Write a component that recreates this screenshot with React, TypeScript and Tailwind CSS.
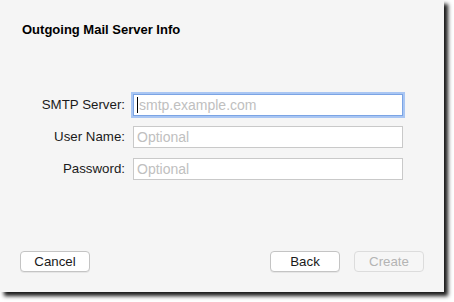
import React from "react";

const font = { fontFamily: '"Liberation Sans", Arial, sans-serif' };

function Row({ label, placeholder, focused }: { label: string; placeholder: string; focused?: boolean }) {
  return (
    <div className="flex items-center h-[22px]">
      <div className="w-[125px] text-right text-[13.3px] text-[#1a1a1a] leading-none">{label}</div>
      <div
        className={
          "ml-[8px] w-[270px] h-[22px] bg-white flex items-center pl-[3px] text-[14px] text-[#c0c0c0] leading-none " +
          (focused
            ? "border border-[#7ba4e4] shadow-[0_0_0_2px_#a9c6f3]"
            : "border border-[#c9c9c9]")
        }
      >
        {focused && <span className="w-px h-[16px] bg-black mr-[1px]" />}
        {placeholder}
      </div>
    </div>
  );
}

function Btn({ children, disabled }: { children: React.ReactNode; disabled?: boolean }) {
  return (
    <div
      className={
        "w-[70px] h-[21px] rounded-[4px] flex items-center justify-center text-[13.3px] leading-none " +
        (disabled
          ? "bg-[#f6f6f6] border border-[#dcdcdc] text-[#b4b4b4]"
          : "bg-white border border-[#c4c4c4] text-[#1a1a1a] shadow-[0_1px_0_rgba(0,0,0,0.06)]")
      }
    >
      {children}
    </div>
  );
}

export default function App() {
  return (
    <div className="w-[454px] h-[302px] bg-white" style={font}>
      <div className="w-[444px] h-[292px] bg-[#f5f5f5] shadow-[4px_4px_4px_rgba(0,0,0,0.9)] flex flex-col">
        <div className="pl-[22px] pt-[23px] text-[13px] font-bold text-black leading-[14px]">
          Outgoing Mail Server Info
        </div>
        <div className="mt-[57px] flex flex-col gap-[10px]">
          <Row label="SMTP Server:" placeholder="smtp.example.com" focused />
          <Row label="User Name:" placeholder="Optional" />
          <Row label="Password:" placeholder="Optional" />
        </div>
        <div className="mt-auto mb-[20px] flex items-center px-[20px]">
          <Btn>Cancel</Btn>
          <div className="flex-1" />
          <Btn>Back</Btn>
          <div className="w-[14px]" />
          <Btn disabled>Create</Btn>
        </div>
      </div>
    </div>
  );
}
